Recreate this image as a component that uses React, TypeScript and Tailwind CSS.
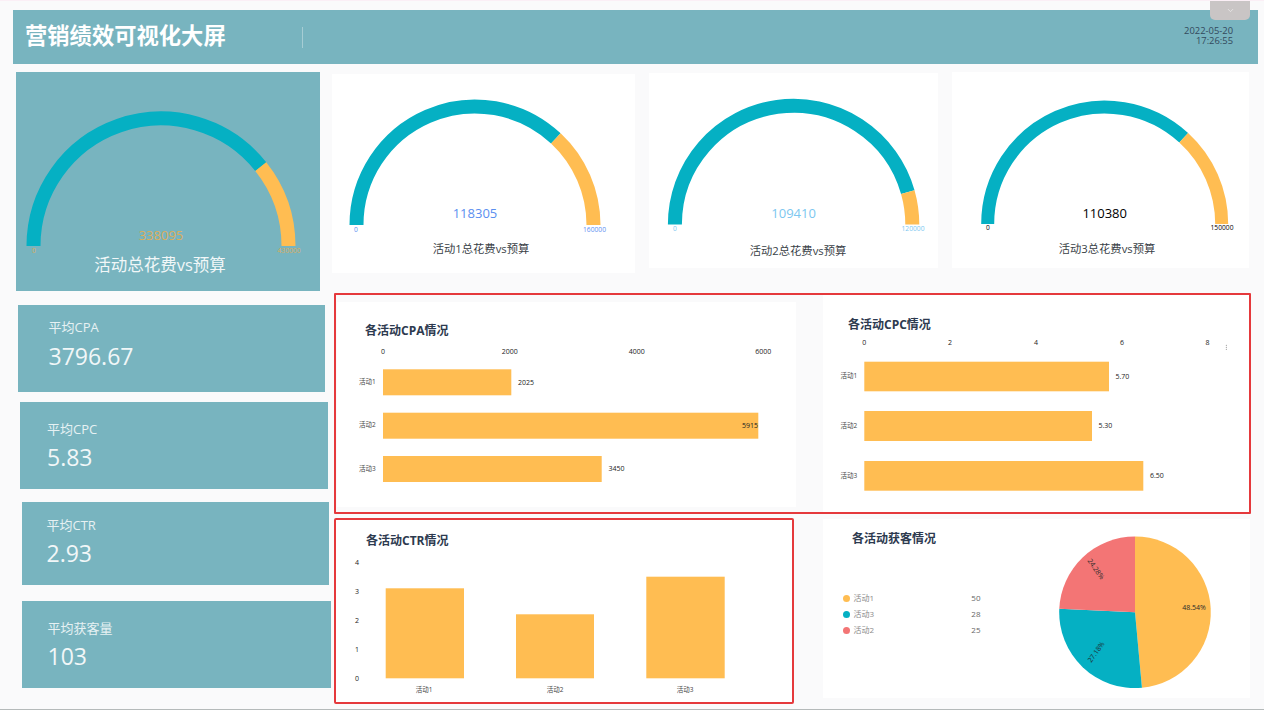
import React from "react";
import { ChevronDown } from "lucide-react";

const TEAL = "#05b0c3";
const ORANGE = "#ffbd52";
const RED = "#f37575";

function arc(cx: number, cy: number, r: number, a0: number, a1: number) {
  const p = (a: number) => {
    const t = Math.PI * (1 - a);
    return [cx + r * Math.cos(t), cy - r * Math.sin(t)];
  };
  const [x0, y0] = p(a0);
  const [x1, y1] = p(a1);
  return `M${x0} ${y0}A${r} ${r} 0 0 1 ${x1} ${y1}`;
}

type GaugeArc = {
  box: string;
  w: number;
  h: number;
  cx: number;
  cy: number;
  R: number;
  sw: number;
  frac: number;
  value: string;
  max: string;
  color: string;
  valueY: number;
  valueSize: number;
  labelY: number;
  minX: number;
  maxX: number;
};

function GaugeSvg(g: GaugeArc) {
  const r = g.R - g.sw / 2;
  return (
    <svg width={g.w} height={g.h} viewBox={g.box} className="block shrink-0">
      <path d={arc(g.cx, g.cy, r, 0, g.frac)} fill="none" stroke={TEAL} strokeWidth={g.sw} />
      <path d={arc(g.cx, g.cy, r, g.frac, 1)} fill="none" stroke={ORANGE} strokeWidth={g.sw} />
      <text x={g.cx} y={g.valueY} textAnchor="middle" dominantBaseline="central" fontSize={g.valueSize} fill={g.color}>
        {g.value}
      </text>
      <text x={g.minX} y={g.labelY} textAnchor="middle" dominantBaseline="central" fontSize="6.7" fill={g.color}>
        0
      </text>
      <text x={g.maxX} y={g.labelY} textAnchor="middle" dominantBaseline="central" fontSize="6.7" fill={g.color}>
        {g.max}
      </text>
    </svg>
  );
}

function Metric({ label, value, className, pad, gap }: { label: string; value: string; className: string; pad: string; gap: string }) {
  return (
    <div className={`bg-[#78b4bf] text-[#f1f7f8] flex flex-col ${pad} ${className}`}>
      <div className="text-[13px] leading-[18px] text-[#e6f1f3]">{label}</div>
      <div className={`text-[23px] leading-[31px] ${gap}`}>{value}</div>
    </div>
  );
}

function CardTitle({ children, className }: { children: React.ReactNode; className: string }) {
  return <div className={`text-[12px] leading-[16px] font-bold text-[#2d3a4f] ${className}`}>{children}</div>;
}

function T({ x, y, s = 7, a = "middle", f = "#222", children }: { x: number; y: number; s?: number; a?: "middle" | "start" | "end"; f?: string; children: React.ReactNode }) {
  return (
    <text x={x} y={y} fontSize={s} textAnchor={a} dominantBaseline="central" fill={f}>
      {children}
    </text>
  );
}

function Bar({ x0, x1, y0, y1 }: { x0: number; x1: number; y0: number; y1: number }) {
  return <rect x={x0} y={y0} width={x1 - x0} height={y1 - y0} fill={ORANGE} />;
}

function slice(cx: number, cy: number, r: number, from: number, to: number) {
  const p = (f: number) => {
    const t = 2 * Math.PI * f - Math.PI / 2;
    return [cx + r * Math.cos(t), cy + r * Math.sin(t)];
  };
  const [x0, y0] = p(from);
  const [x1, y1] = p(to);
  const large = to - from > 0.5 ? 1 : 0;
  return `M${cx} ${cy}L${x0} ${y0}A${r} ${r} 0 ${large} 1 ${x1} ${y1}Z`;
}

function LegendRow({ color, name, value }: { color: string; name: string; value: string }) {
  return (
    <div className="flex items-center h-[16px] w-[138px] text-[8px]">
      <span className="w-[7px] h-[7px] rounded-full" style={{ backgroundColor: color }} />
      <span className="ml-[4px] text-[#8a8a8a]">{name}</span>
      <span className="ml-auto text-[#666]">{value}</span>
    </div>
  );
}

export default function App() {
  return (
    <div className="relative w-[1264px] h-[710px] overflow-hidden bg-[#fafafb] border-t border-t-[#fbeff6] border-b border-b-[#b5baba] flex flex-col [font-family:'Open_Sans','Noto_Sans_CJK_SC',sans-serif]">
      {/* Header */}
      <header className="ml-[13px] mt-[9px] w-[1245px] h-[54px] shrink-0 bg-[#78b4bf] flex items-center pl-[12px] pr-[25px]">
        <h1 className="text-[22.3px] leading-[30px] font-bold text-white w-[277px] mb-[6px] [font-family:'Noto_Sans_CJK_SC',sans-serif]">营销绩效可视化大屏</h1>
        <div className="w-px h-[21px] bg-[#a6cdd4]" />
        <div className="ml-auto text-right text-[9.4px] leading-[10px] text-[#33495c] mb-[2px]">
          <div>2022-05-20</div>
          <div>17:26:55</div>
        </div>
      </header>
      <div className="absolute top-0 left-[1210px] w-[40px] h-[19px] bg-[#c9c5c5] rounded-b-[5px] flex items-center justify-center">
        <ChevronDown size={9} className="text-[#ecebeb]" strokeWidth={2} />
      </div>

      {/* Body */}
      <div className="flex mt-[8px]">
        {/* Left column */}
        <div className="w-[332px] shrink-0 flex flex-col">
          <div className="ml-[16px] w-[304px] h-[219px] bg-[#78b4bf] flex flex-col">
            <GaugeSvg box="16 72 304 183" w={304} h={183} cx={161} cy={246} R={134.5} sw={14} frac={0.786} value="338095" max="430000" color="#dcae5c" valueY={235} valueSize={13} labelY={250} minX={34} maxX={289} />
            <div className="text-[16.5px] leading-[20px] text-[#f1f7f8] text-center pr-[16px]">活动总花费vs预算</div>
          </div>
          <Metric className="ml-[18px] mt-[14px] w-[307px] h-[87px]" pad="pl-[30.5px] pt-[13px]" gap="mt-[5px]" label="平均CPA" value="3796.67" />
          <Metric className="ml-[20px] mt-[10px] w-[308px] h-[87px]" pad="pl-[27px] pt-[17.5px]" gap="mt-[4px]" label="平均CPC" value="5.83" />
          <Metric className="ml-[21.5px] mt-[13px] w-[307px] h-[83px]" pad="pl-[25px] pt-[14px]" gap="mt-[4px]" label="平均CTR" value="2.93" />
          <Metric className="ml-[21.5px] mt-[15.5px] w-[309.5px] h-[87.5px]" pad="pl-[26px] pt-[18px]" gap="mt-[4.5px]" label="平均获客量" value="103" />
        </div>

        {/* Right column */}
        <div className="flex flex-col w-[932px] shrink-0">
          {/* Gauges */}
          <div className="flex items-start h-[221px]">
            <div className="mt-[2px] w-[303px] h-[199px] bg-white flex flex-col">
              <GaugeSvg box="332 74 303 159" w={303} h={159} cx={475} cy={225} R={125.5} sw={14} frac={0.739} value="118305" max="160000" color="#5b8ff0" valueY={213} valueSize={13} labelY={229} minX={356} maxX={594.5} />
              <div className="mt-[8px] text-[11.3px] leading-[16px] text-[#3a3f47] text-center pr-[5px]">活动1总花费vs预算</div>
            </div>
            <div className="ml-[14px] mt-[1px] w-[289px] h-[195px] bg-white flex flex-col">
              <GaugeSvg box="649 73 289 159" w={289} h={159} cx={793.6} cy={224.5} R={125.7} sw={14} frac={0.912} value="109410" max="120000" color="#7cc7f0" valueY={213} valueSize={13} labelY={228.5} minX={675} maxX={913} />
              <div className="mt-[11px] text-[11.3px] leading-[16px] text-[#3a3f47] text-center pl-[9px]">活动2总花费vs预算</div>
            </div>
            <div className="ml-[14px] w-[297px] h-[196px] bg-white flex flex-col">
              <GaugeSvg box="952 72 297 160" w={297} h={160} cx={1104.7} cy={224} R={123.5} sw={13} frac={0.736} value="110380" max="150000" color="#000000" valueY={213} valueSize={13} labelY={227.5} minX={988} maxX={1222} />
              <div className="mt-[9px] text-[11.3px] leading-[16px] text-[#3a3f47] text-center pl-[13px]">活动3总花费vs预算</div>
            </div>
          </div>

          {/* Red framed row */}
          <div className="ml-[2px] w-[917px] h-[221px] border-2 border-[#e5393c] rounded-[1px] flex items-start">
            <div className="ml-px mt-[7px] w-[459px] h-[205px] bg-white flex flex-col">
              <CardTitle className="ml-[28px] mt-[21px]">各活动CPA情况</CardTitle>
              <svg width={459} height={160} viewBox="337 340 459 160" className="block mt-[1px]">
                <T x={383} y={351.7}>0</T>
                <T x={509.7} y={351.7}>2000</T>
                <T x={636.7} y={351.7}>4000</T>
                <T x={763.3} y={351.7}>6000</T>
                <Bar x0={383} x1={511.3} y0={369.3} y1={395.3} />
                <Bar x0={383} x1={758.3} y0={412.7} y1={438.7} />
                <Bar x0={383} x1={601.7} y0={456} y1={482} />
                <T x={359} y={381} a="start" s={6.5} f="#444">活动1</T>
                <T x={359} y={424.5} a="start" s={6.5} f="#444">活动2</T>
                <T x={359} y={468} a="start" s={6.5} f="#444">活动3</T>
                <T x={518} y={382} a="start">2025</T>
                <T x={758} y={425} a="end">5915</T>
                <T x={608.5} y={468} a="start">3450</T>
              </svg>
            </div>
            <div className="ml-[27px] w-[426px] h-[217px] bg-white flex flex-col">
              <CardTitle className="ml-[25px] mt-[22px]">各活动CPC情况</CardTitle>
              <svg width={426} height={170} viewBox="823 334 426 170" className="block mt-[1px]">
                <T x={864.3} y={342.7}>0</T>
                <T x={950} y={342.7}>2</T>
                <T x={1036} y={342.7}>4</T>
                <T x={1122} y={342.7}>6</T>
                <T x={1207.5} y={342.7}>8</T>
                <circle cx={1226.3} cy={345.2} r={0.5} fill="#777" />
                <circle cx={1226.3} cy={347.2} r={0.5} fill="#777" />
                <circle cx={1226.3} cy={349.2} r={0.5} fill="#777" />
                <Bar x0={864.3} x1={1109} y0={361.7} y1={391.3} />
                <Bar x0={864.3} x1={1092} y0={411} y1={441} />
                <Bar x0={864.3} x1={1143.3} y0={461} y1={490.7} />
                <T x={840.5} y={375.5} a="start" s={6.5} f="#444">活动1</T>
                <T x={840.5} y={425} a="start" s={6.5} f="#444">活动2</T>
                <T x={840.5} y={475} a="start" s={6.5} f="#444">活动3</T>
                <T x={1115.5} y={376} a="start">5.70</T>
                <T x={1098.5} y={425.5} a="start">5.30</T>
                <T x={1150} y={475} a="start">6.50</T>
              </svg>
            </div>
          </div>

          {/* Last row */}
          <div className="flex items-start mt-[4px]">
            <div className="ml-[2px] w-[460px] h-[186px] bg-white border-2 border-[#e5393c] rounded-[2px] flex flex-col">
              <CardTitle className="ml-[30px] mt-[13px]">各活动CTR情况</CardTitle>
              <svg width={456} height={150} viewBox="336 550 456 150" className="block mt-[1px]">
                <T x={357} y={562.3}>4</T>
                <T x={357} y={591.3}>3</T>
                <T x={357} y={620.3}>2</T>
                <T x={357} y={649.3}>1</T>
                <T x={357} y={678.5}>0</T>
                <Bar x0={385.7} x1={464} y0={588.3} y1={678.3} />
                <Bar x0={516} x1={594} y0={614.3} y1={678.3} />
                <Bar x0={646.3} x1={724.7} y0={576.7} y1={678.3} />
                <T x={424} y={689} s={6.5} f="#444">活动1</T>
                <T x={555} y={689} s={6.5} f="#444">活动2</T>
                <T x={685} y={689} s={6.5} f="#444">活动3</T>
              </svg>
            </div>
            <div className="ml-[29px] mt-px w-[427px] h-[179px] bg-white flex">
              <div className="pl-[19.5px] flex flex-col">
                <CardTitle className="ml-[9.5px] mt-[12px]">各活动获客情况</CardTitle>
                <div className="mt-[43px] flex flex-col">
                  <LegendRow color={ORANGE} name="活动1" value="50" />
                  <LegendRow color={TEAL} name="活动3" value="28" />
                  <LegendRow color={RED} name="活动2" value="25" />
                </div>
              </div>
              <svg width={190} height={165} viewBox="1050 530 190 165" className="block ml-auto mr-[10px] mt-[11px]">
                <path d={slice(1135, 612.3, 75.8, 0, 0.4854)} fill={ORANGE} />
                <path d={slice(1135, 612.3, 75.8, 0.4854, 0.7572)} fill={TEAL} />
                <path d={slice(1135, 612.3, 75.8, 0.7572, 1)} fill={RED} />
                <T x={1194} y={607.5} f="#2a2a2a">48.54%</T>
                <g transform="rotate(-55 1096 652)">
                  <T x={1096} y={652} f="#1d2a30">27.18%</T>
                </g>
                <g transform="rotate(55 1096 569)">
                  <T x={1096} y={569} f="#2a2a2a">24.28%</T>
                </g>
              </svg>
            </div>
          </div>
        </div>
      </div>
    </div>
  );
}
